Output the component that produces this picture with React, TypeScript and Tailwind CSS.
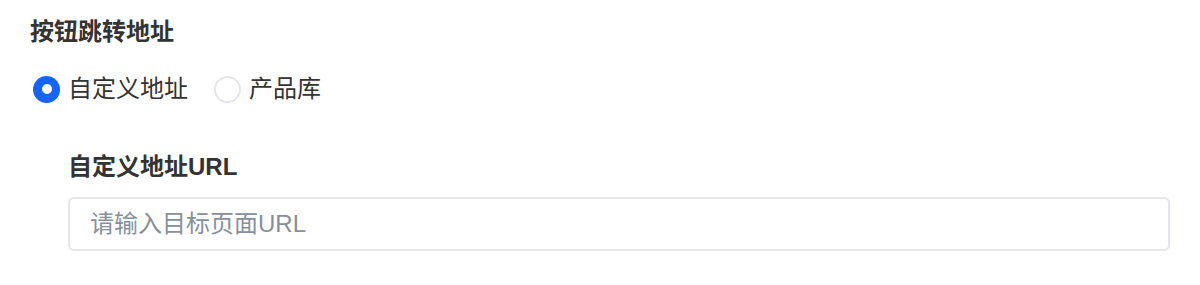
const font = { fontFamily: '"Liberation Sans", "Noto Sans CJK SC", sans-serif' }

function Radio({ label, checked }: { label: string; checked?: boolean }) {
  return (
    <label className="flex items-center gap-2 cursor-pointer">
      {checked ? (
        <span className="flex h-[27px] w-[27px] items-center justify-center rounded-full bg-[#1664ff]">
          <span className="h-[10px] w-[10px] rounded-full bg-white" />
        </span>
      ) : (
        <span className="h-[27px] w-[27px] rounded-full border-2 border-[#e5e6eb] bg-white" />
      )}
      <span className="text-[24px] leading-[32px] text-[#333]">{label}</span>
    </label>
  )
}

export default function App() {
  return (
    <div className="h-[285px] w-[1200px] bg-white pl-[30px] pt-4" style={font}>
      <h2 className="text-[24px] font-bold leading-[32px] text-[#333]">按钮跳转地址</h2>

      <div className="mt-[25px] flex items-center gap-[26px] pl-[3px]">
        <Radio label="自定义地址" checked />
        <Radio label="产品库" />
      </div>

      <div className="mt-[46px] pl-[38px] pr-[30px]">
        <div className="text-[24px] font-bold leading-[32px] text-[#333]">自定义地址URL</div>
        <input
          className="mt-[14px] h-[54px] w-full rounded-[6px] border-2 border-[#e5e6eb] px-5 text-[24px] text-[#333] outline-none placeholder:text-[#86909c]"
          placeholder="请输入目标页面URL"
          style={font}
        />
      </div>
    </div>
  )
}
